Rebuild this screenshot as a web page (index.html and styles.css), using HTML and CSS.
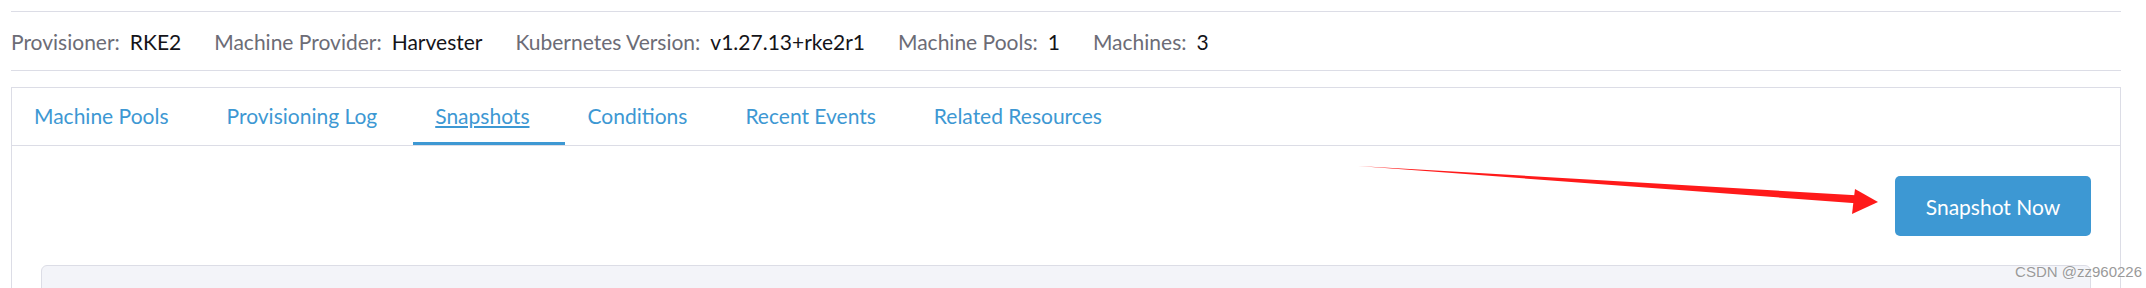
FILE: index.html
```html
<!DOCTYPE html>
<html lang="en">
<head>
  <meta charset="UTF-8" />
  <title>Cluster Detail</title>
  <link rel="stylesheet" href="styles.css">
</head>
<body>
  <div class="page">
    <div class="info-bar">
      <div class="info-item"><span class="label">Provisioner:</span><span class="value">RKE2</span></div>
      <div class="info-item"><span class="label">Machine Provider:</span><span class="value">Harvester</span></div>
      <div class="info-item"><span class="label">Kubernetes Version:</span><span class="value">v1.27.13+rke2r1</span></div>
      <div class="info-item"><span class="label">Machine Pools:</span><span class="value">1</span></div>
      <div class="info-item"><span class="label">Machines:</span><span class="value">3</span></div>
    </div>

    <div class="tabbed">
      <ul class="tabs">
        <li class="tab"><a href="#">Machine Pools</a></li>
        <li class="tab"><a href="#">Provisioning Log</a></li>
        <li class="tab active"><a href="#">Snapshots</a></li>
        <li class="tab"><a href="#">Conditions</a></li>
        <li class="tab"><a href="#">Recent Events</a></li>
        <li class="tab"><a href="#">Related Resources</a></li>
      </ul>
      <div class="tab-body">
        <div class="toolbar">
          <button class="btn-primary">Snapshot Now</button>
        </div>
        <div class="snapshot-table"></div>
      </div>
    </div>
  </div>

  <!-- annotation arrow drawn over the screenshot -->
  <svg class="annotation" width="2146" height="288" viewBox="0 0 2146 288">
    <polygon points="1358,166 1860,195.5 1859,203.5" fill="#ff1a1a" />
    <polygon points="1855,189 1878,202 1852,214" fill="#ff1a1a" />
  </svg>
  <div class="watermark">CSDN @zz960226</div>
</body>
</html>
```

FILE: styles.css
```css
body {
  font-family: Lato, 'Noto Sans', sans-serif;
  margin: 0;
  padding: 0;
  background: #fff;
  color: #141419;
  position: relative;
  height: 288px;
  overflow: hidden;
}
.page {
  margin-left: 11px;
  width: 2110px;
  padding-top: 11px;
}
.info-bar {
  display: flex;
  align-items: center;
  height: 58px;
  border-top: 1px solid #dcdde6;
  border-bottom: 1px solid #dcdde6;
  font-size: 21px;
}
.info-item {
  margin-right: 33px;
}
.info-item .label {
  color: #6c6c76;
  margin-right: 10px;
}
.info-item .value {
  color: #141419;
}
.tabbed {
  margin-top: 16px;
  border: 1px solid #dcdde6;
  border-bottom: none;
}
.tabs {
  list-style: none;
  margin: 0;
  padding: 0;
  display: flex;
  height: 57px;
  border-bottom: 1px solid #dcdde6;
}
.tab {
  display: flex;
  align-items: center;
  padding: 0 36px 0 22px;
  border-bottom: 3px solid transparent;
}
.tab a {
  color: #3d98d3;
  text-decoration: none;
  font-size: 21px;
}
.tab.active {
  border-bottom-color: #3d98d3;
}
.tab.active a {
  text-decoration: underline;
}
.tab-body {
  padding: 30px 29px 0 29px;
}
.toolbar {
  display: flex;
  justify-content: flex-end;
  margin-bottom: 29px;
}
.btn-primary {
  background: #3d98d3;
  color: #fff;
  border: none;
  border-radius: 5px;
  font-family: Lato, 'Noto Sans', sans-serif;
  font-size: 21px;
  width: 196px;
  height: 60px;
  cursor: pointer;
}
.snapshot-table {
  height: 80px;
  background: #f3f4f9;
  border: 1px solid #dcdde6;
  border-radius: 6px 6px 0 0;
}
.annotation {
  position: absolute;
  left: 0;
  top: 0;
  pointer-events: none;
}
.watermark {
  position: absolute;
  right: 4px;
  top: 263px;
  font-family: 'Liberation Sans', Arial, sans-serif;
  font-size: 15px;
  color: #9a9a9a;
  text-shadow: 0 0 2px #fff;
}
```
